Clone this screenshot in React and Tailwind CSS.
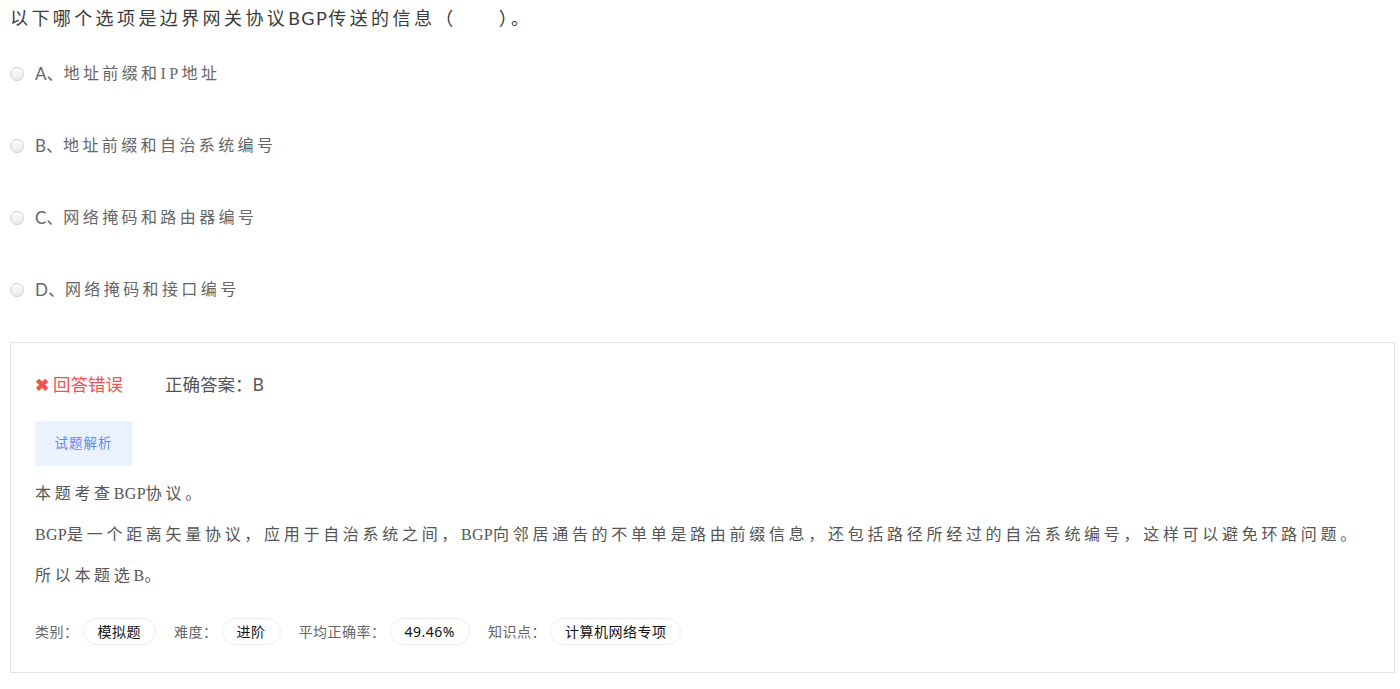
import React from 'react';

const options = [
    { key: 'A', text: '地址前缀和IP地址' },
    { key: 'B', text: '地址前缀和自治系统编号' },
    { key: 'C', text: '网络掩码和路由器编号' },
    { key: 'D', text: '网络掩码和接口编号' },
];

const meta = [
    { label: '类别：', value: '模拟题' },
    { label: '难度：', value: '进阶' },
    { label: '平均正确率：', value: '49.46%' },
    { label: '知识点：', value: '计算机网络专项' },
];

const sans = "font-['Lato','Noto_Sans_CJK_SC',sans-serif]";
const serif = "font-['Liberation_Serif','Noto_Sans_CJK_SC',serif]";
const yahei = "font-['Noto_Sans','Noto_Sans_CJK_SC',sans-serif]";

function Radio() {
    return (
        <span className="inline-block w-[14px] h-[14px] rounded-full border border-[#cfcfcf] bg-gradient-to-b from-[#fdfdfd] to-[#eaeaea] shrink-0" />
    );
}

// latin words in the explanation stay tight, only the CJK text is spaced out
function Latin({ children }) {
    return <span className="tracking-[0.3px]">{children}</span>;
}

export default function App() {
    return (
        <div className="bg-white min-h-screen pl-[10px] pr-[5px] pb-4">
            <div className={`h-[36px] leading-[36px] text-[18px] tracking-[3.4px] text-[#3a3a3a] ${sans}`}>
                以下哪个选项是边界网关协议<span className="tracking-[1.5px]">BGP</span>传送的信息（<span className="inline-block w-[42px]" />）。
            </div>

            <div className="mt-[2px]">
                {options.map(o => (
                    <div key={o.key} className="h-[72px] flex items-center">
                        <Radio />
                        <span className={`ml-[11px] text-[17px] text-[#666] ${sans}`}>{o.key}、</span>
                        <span className={`text-[16px] tracking-[3.4px] text-[#666] ${serif}`}>{o.text}</span>
                    </div>
                ))}
            </div>

            <div className="mt-[16px] border border-[#e2e2e2] px-[24px] pt-[29px] pb-[27px]">
                <div className={`flex items-center h-6 text-[17.5px] ${yahei}`}>
                    <span className="text-[#f5504f] text-[17px] font-bold mr-[4px] leading-none">✖</span>
                    <span className="text-[#f5504f]">回答错误</span>
                    <span className="ml-[42px] text-[#555]">正确答案：B</span>
                </div>

                <div className={`mt-[25px] w-[97px] h-[45px] flex items-center justify-center bg-[#ebf2ff] text-[#5a8cf0] text-[13.5px] tracking-[1px] ${yahei}`}>
                    试题解析
                </div>

                <div className={`mt-[7px] text-[16px] leading-[41px] tracking-[3.7px] text-[#555] ${serif}`}>
                    <p>本题考查<Latin>BGP</Latin>协议。</p>
                    <p><Latin>BGP</Latin>是一个距离矢量协议，应用于自治系统之间，<Latin>BGP</Latin>向邻居通告的不单单是路由前缀信息，还包括路径所经过的自治系统编号，这样可以避免环路问题。</p>
                    <p>所以本题选<Latin>B</Latin>。</p>
                </div>

                <div className={`mt-[22px] flex items-center gap-[18px] text-[14px] tracking-[0.5px] ${yahei}`}>
                    {meta.map(m => (
                        <div key={m.label} className="flex items-center">
                            <span className="text-[#666] mr-[4px]">{m.label}</span>
                            <span className="h-[27px] px-[14px] flex items-center rounded-full border border-[#ededed] text-[#111]">{m.value}</span>
                        </div>
                    ))}
                </div>
            </div>
        </div>
    );
}
